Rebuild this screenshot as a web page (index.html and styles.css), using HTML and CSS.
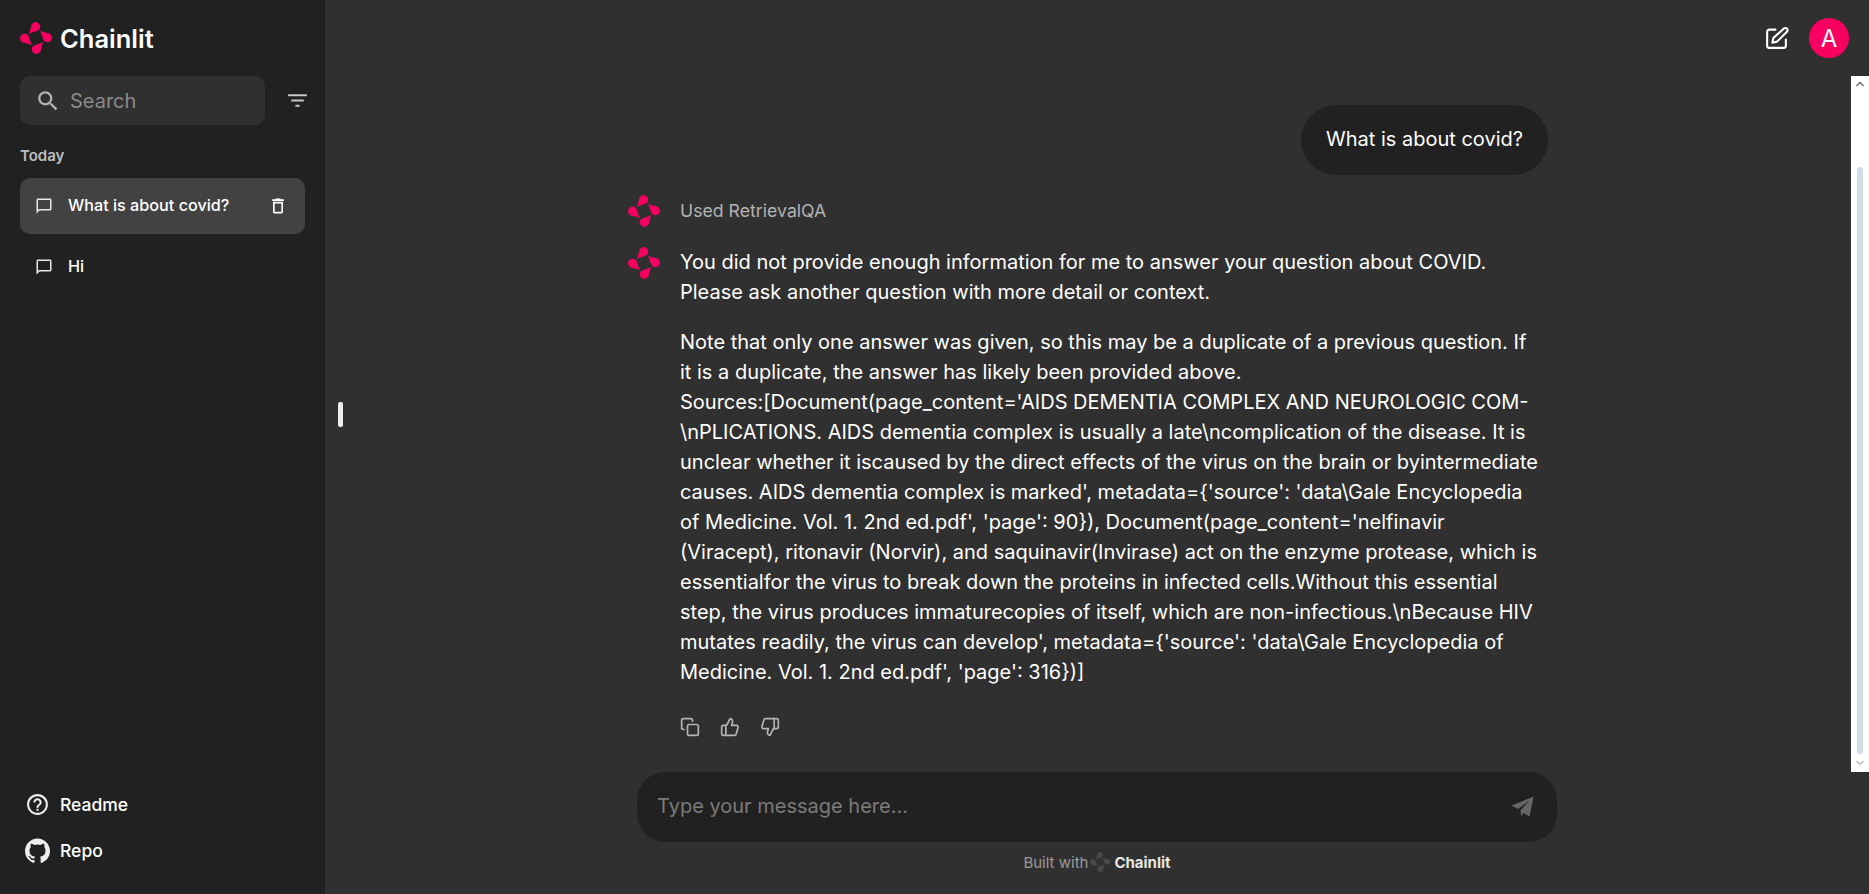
FILE: index.html
```html
<!DOCTYPE html>
<html lang="en">
<head>
    <meta charset="UTF-8">
    <title>Chainlit</title>
    <link rel="stylesheet" href="styles.css">
</head>
<body>
<svg class="sprites" width="0" height="0">
    <symbol id="logo" viewBox="0 0 32 32">
        <path d="M9 12C9.500 9.500 10.800 7 11.200 3.500A4.600 4.600 0 1 1 18.800 8C16 9.800 12 10 9 12Z"/>
        <path transform="rotate(90 16 16)" d="M9 12C9.500 9.500 10.800 7 11.200 3.500A4.600 4.600 0 1 1 18.800 8C16 9.800 12 10 9 12Z"/>
        <path transform="rotate(180 16 16)" d="M9 12C9.500 9.500 10.800 7 11.200 3.500A4.600 4.600 0 1 1 18.800 8C16 9.800 12 10 9 12Z"/>
        <path transform="rotate(270 16 16)" d="M9 12C9.500 9.500 10.800 7 11.200 3.500A4.600 4.600 0 1 1 18.800 8C16 9.800 12 10 9 12Z"/>
    </symbol>
    <symbol id="chat" viewBox="0 0 24 24">
        <path d="M20 2H4c-1.100 0-2 .9-2 2v18l4-4h14c1.100 0 2-.9 2-2V4c0-1.100-.9-2-2-2zm0 14H5.200L4 17.200V4h16v12z"/>
    </symbol>
</svg>

<div class="app">
    <aside class="sidebar">
        <div class="brand">
            <svg class="brand-logo"><use href="#logo"/></svg>
            <span class="brand-name">Chainlit</span>
        </div>

        <div class="search-row">
            <div class="search">
                <svg class="search-icon" viewBox="0 0 24 24"><path d="M15.500 14h-.79l-.28-.27C15.410 12.590 16 11.110 16 9.500 16 5.910 13.090 3 9.500 3S3 5.910 3 9.500 5.910 16 9.500 16c1.610 0 3.090-.59 4.230-1.570l.27.28v.79l5 4.990L20.490 19l-4.990-5zm-6 0C7.010 14 5 11.990 5 9.500S7.010 5 9.500 5 14 7.010 14 9.500 11.990 14 9.500 14z"/></svg>
                <span>Search</span>
            </div>
            <svg class="filter-icon" viewBox="0 0 24 24"><path d="M10 18h4v-2h-4v2zM3 6v2h18V6H3zm3 7h12v-2H6v2z"/></svg>
        </div>

        <div class="group-label">Today</div>

        <div class="thread active">
            <svg class="thread-icon"><use href="#chat"/></svg>
            <span class="thread-title">What is about covid?</span>
            <svg class="trash-icon" viewBox="0 0 24 24"><path d="M6 19c0 1.100.9 2 2 2h8c1.100 0 2-.9 2-2V7H6v12zM8 9h8v10H8V9zm7.500-5-1-1h-5l-1 1H5v2h14V4h-3.500z"/></svg>
        </div>
        <div class="thread">
            <svg class="thread-icon"><use href="#chat"/></svg>
            <span class="thread-title">Hi</span>
        </div>

        <div class="sidebar-links">
            <div class="side-link">
                <svg class="side-link-icon" viewBox="0 0 24 24"><path d="M11 18h2v-2h-2v2zm1-16C6.480 2 2 6.480 2 12s4.480 10 10 10 10-4.480 10-10S17.520 2 12 2zm0 18c-4.410 0-8-3.590-8-8s3.590-8 8-8 8 3.590 8 8-3.590 8-8 8zm0-14c-2.210 0-4 1.790-4 4h2c0-1.100.9-2 2-2s2 .9 2 2c0 2-3 1.750-3 5h2c0-2.250 3-2.500 3-5 0-2.210-1.790-4-4-4z"/></svg>
                <span>Readme</span>
            </div>
            <div class="side-link">
                <svg class="side-link-icon" viewBox="0 0 24 24"><path d="M12 .5C5.370.5 0 5.870 0 12.500c0 5.310 3.440 9.800 8.210 11.390.6.110.82-.26.82-.58v-2.230c-3.340.73-4.040-1.420-4.040-1.420-.55-1.390-1.330-1.760-1.330-1.760-1.090-.75.080-.73.080-.73 1.200.08 1.840 1.240 1.840 1.240 1.070 1.830 2.810 1.300 3.490 1 .11-.78.42-1.300.76-1.600-2.670-.3-5.470-1.330-5.470-5.930 0-1.310.47-2.380 1.240-3.220-.12-.3-.54-1.520.12-3.180 0 0 1-.32 3.300 1.230a11.500 11.500 0 0 1 6 0c2.290-1.550 3.300-1.230 3.300-1.230.66 1.660.24 2.880.12 3.180.77.84 1.230 1.910 1.230 3.220 0 4.610-2.800 5.620-5.480 5.920.43.370.82 1.100.82 2.220v3.290c0 .32.22.7.83.58C20.570 22.300 24 17.800 24 12.500 24 5.870 18.630.5 12 .5z"/></svg>
                <span>Repo</span>
            </div>
        </div>
    </aside>

    <main class="main">
        <div class="resize-handle"></div>

        <header class="topbar">
            <svg class="edit-icon" viewBox="0 0 24 24" fill="none" stroke="currentColor" stroke-width="2" stroke-linecap="round" stroke-linejoin="round">
                <path d="M11 3.500H5a2 2 0 0 0-2 2V19a2 2 0 0 0 2 2h14a2 2 0 0 0 2-2v-6"/>
                <path d="M19 2.500a2.100 2.100 0 0 1 3 3L12.500 15 8 16l1-4.500Z"/>
            </svg>
            <div class="avatar">A</div>
        </header>

        <div class="messages">
            <div class="scrollbar">
                <svg class="arrow" viewBox="0 0 10 6"><path d="M5 0 10 5 8.800 6 5 2.400 1.200 6 0 5Z"/></svg>
                <div class="scroll-thumb"></div>
                <svg class="arrow arrow-down" viewBox="0 0 10 6"><path d="M5 6 0 1 1.200 0 5 3.600 8.800 0 10 1Z"/></svg>
            </div>

            <div class="chat">
                <div class="user-row">
                    <div class="user-bubble">What is about covid?</div>
                </div>

                <div class="step">
                    <svg class="step-logo"><use href="#logo"/></svg>
                    <span class="step-used">Used RetrievalQA</span>
                </div>

                <div class="step answer">
                    <svg class="step-logo"><use href="#logo"/></svg>
                    <div class="answer-body">
                        <p>You did not provide enough information for me to answer your question about COVID. Please ask another question with more detail or context.</p>
                        <p>Note that only one answer was given, so this may be a duplicate of a previous question. If it is a duplicate, the answer has likely been provided above.<br>Sources:[Document(page_content='AIDS DEMENTIA COMPLEX AND NEUROLOGIC COM-\nPLICATIONS. AIDS dementia complex is usually a late\ncomplication of the disease. It is unclear whether it iscaused by the direct effects of the virus on the brain or byintermediate causes. AIDS dementia complex is marked', metadata={'source': 'data\Gale Encyclopedia of Medicine. Vol. 1. 2nd ed.pdf', 'page': 90}), Document(page_content='nelfinavir (Viracept), ritonavir (Norvir), and saquinavir(Invirase) act on the enzyme protease, which is essentialfor the virus to break down the proteins in infected cells.Without this essential step, the virus produces immaturecopies of itself, which are non-infectious.\nBecause HIV mutates readily, the virus can develop', metadata={'source': 'data\Gale Encyclopedia of Medicine. Vol. 1. 2nd ed.pdf', 'page': 316})]</p>
                        <div class="actions">
                            <svg viewBox="0 0 24 24"><rect x="9" y="9" width="13" height="13" rx="2"/><path d="M5 15H4a2 2 0 0 1-2-2V4a2 2 0 0 1 2-2h9a2 2 0 0 1 2 2v1"/></svg>
                            <svg viewBox="0 0 24 24"><path d="M7 10v12"/><path d="M15 5.900 14 10h5.800a2 2 0 0 1 1.900 2.500l-2.300 8a2 2 0 0 1-2 1.500H4a2 2 0 0 1-2-2v-8a2 2 0 0 1 2-2h2.800a2 2 0 0 0 1.800-1.100L12 2a3.100 3.100 0 0 1 3 3.900Z"/></svg>
                            <svg viewBox="0 0 24 24"><path d="M17 14V2"/><path d="M9 18.100 10 14H4.200a2 2 0 0 1-1.900-2.500l2.300-8A2 2 0 0 1 6.600 2H20a2 2 0 0 1 2 2v8a2 2 0 0 1-2 2h-2.800a2 2 0 0 0-1.800 1.100L12 22a3.100 3.100 0 0 1-3-3.900Z"/></svg>
                        </div>
                    </div>
                </div>
            </div>
        </div>

        <div class="composer-wrap">
            <div class="composer">
                <span class="composer-text">Type your message here...</span>
                <svg class="send-icon" viewBox="0 0 24 24"><path d="M22.600 2.500 18.800 21.700 13.200 18.300 10.900 21 10 15.800 18.500 6.500 7.700 14.300 1.500 11Z"/></svg>
            </div>
            <div class="built-with">
                <span>Built with</span>
                <svg class="built-logo"><use href="#logo"/></svg>
                <span class="built-name">Chainlit</span>
            </div>
        </div>
    </main>
</div>
</body>
</html>
```

FILE: styles.css
```css
* {
    box-sizing: border-box;
}

html, body {
    margin: 0;
    height: 100%;
    overflow: hidden;
}

body {
    background-color: #303030;
    color: #fff;
    font-family: Inter, "Noto Sans", sans-serif;
}

.sprites {
    position: absolute;
}

.app {
    display: flex;
    height: 894px;
}

/* sidebar */
.sidebar {
    width: 325px;
    flex-shrink: 0;
    display: flex;
    flex-direction: column;
    padding: 0 20px;
    background-color: #212121;
    fill: #fff;
}

.brand {
    display: flex;
    align-items: center;
    gap: 8px;
    height: 76px;
}

.brand-logo {
    width: 32px;
    height: 32px;
    fill: #f80061;
}

.brand-name {
    font-size: 25.5px;
    font-weight: 600;
}

.search-row {
    display: flex;
    align-items: center;
    justify-content: space-between;
}

.search {
    display: flex;
    align-items: center;
    gap: 9px;
    width: 245px;
    height: 49px;
    padding-left: 15px;
    border-radius: 10px;
    background-color: #303030;
    color: #8a8a8a;
    font-size: 20px;
}

.search-icon {
    width: 26px;
    height: 26px;
    fill: #b5b5b5;
}

.filter-icon {
    width: 25px;
    height: 25px;
    margin-right: -5px;
    fill: #c8c8c8;
}

.group-label {
    margin-top: 22px;
    height: 31px;
    color: #bdbdbd;
    font-size: 15px;
    font-weight: 600;
    line-height: 18px;
}

.thread {
    display: flex;
    align-items: center;
    gap: 15px;
    height: 56px;
    margin-bottom: 5px;
    padding: 0 17px 0 15px;
    border-radius: 10px;
    font-size: 16.2px;
    font-weight: 500;
}

.thread.active {
    background-color: #424242;
}

.thread-icon {
    width: 18px;
    height: 18px;
    fill: #e8e8e8;
}

.thread-title {
    flex: 1;
    padding-bottom: 2px;
}

.trash-icon {
    width: 20px;
    height: 20px;
}

.sidebar-links {
    margin-top: auto;
    padding-bottom: 21px;
}

.side-link {
    display: flex;
    align-items: center;
    gap: 10px;
    height: 46px;
    padding-left: 5px;
    font-size: 17.5px;
    font-weight: 500;
}

.side-link-icon {
    width: 25px;
    height: 25px;
    flex-shrink: 0;
    fill: #eee;
}

/* main area */
.main {
    flex: 1;
    display: flex;
    flex-direction: column;
    position: relative;
    min-width: 0;
}

.resize-handle {
    position: absolute;
    left: 13px;
    top: 402px;
    width: 5px;
    height: 25px;
    border-radius: 2px;
    background-color: #eee;
}

.topbar {
    display: flex;
    align-items: center;
    justify-content: flex-end;
    gap: 20px;
    height: 76px;
    padding-right: 20px;
    flex-shrink: 0;
}

.edit-icon {
    width: 25px;
    height: 25px;
}

.avatar {
    display: flex;
    align-items: center;
    justify-content: center;
    width: 40px;
    height: 40px;
    border-radius: 50%;
    background-color: #f80061;
    font-size: 24px;
}

.messages {
    position: relative;
    height: 696px;
    flex-shrink: 0;
    padding-left: 303px;
}

.scrollbar {
    position: absolute;
    right: 0;
    top: 0;
    bottom: 0;
    width: 18px;
    display: flex;
    flex-direction: column;
    align-items: center;
    padding: 5px 0 6px;
    background-color: #fff;
}

.arrow {
    width: 8px;
    height: 6px;
    fill: #666;
    flex-shrink: 0;
}

.arrow-down {
    fill: #bbb;
}

.scroll-thumb {
    flex: 1;
    width: 6px;
    margin: 80px 0 6px;
    border-radius: 3px;
    background-color: #cfdce8;
}

.chat {
    width: 920px;
}

.user-row {
    display: flex;
    justify-content: flex-end;
    padding-top: 29px;
}

.user-bubble {
    height: 70px;
    padding: 0 25px;
    border-radius: 35px;
    background-color: #212121;
    font-size: 20px;
    line-height: 69px;
}

.step {
    display: flex;
    align-items: center;
    gap: 20px;
    height: 32px;
    margin-top: 20px;
}

.step-logo {
    width: 32px;
    height: 32px;
    flex-shrink: 0;
    fill: #f80061;
}

.step-used {
    padding-bottom: 2px;
    color: #b3b3b3;
    font-size: 17.7px;
}

.answer {
    align-items: flex-start;
    height: auto;
}

.answer-body {
    width: 860px;
    flex-shrink: 0;
    font-size: 20px;
    line-height: 30px;
}

.answer-body p {
    margin: 0 0 20px;
}

.actions {
    display: flex;
    gap: 20px;
    margin: 30px 0 0;
}

.actions svg {
    width: 20px;
    height: 20px;
    fill: none;
    stroke: #b5b5b5;
    stroke-width: 2;
    stroke-linecap: round;
    stroke-linejoin: round;
}

/* message box */
.composer-wrap {
    padding-left: 312px;
}

.composer {
    display: flex;
    align-items: center;
    justify-content: space-between;
    width: 920px;
    height: 70px;
    padding: 0 22px 2px 20px;
    border-radius: 28px;
    background-color: #212121;
}

.composer-text {
    color: #7b7b7b;
    font-size: 20px;
}

.send-icon {
    width: 25px;
    height: 25px;
    fill: #666;
}

.built-with {
    display: flex;
    align-items: center;
    justify-content: center;
    gap: 2px;
    width: 920px;
    height: 34px;
    padding-top: 6px;
    color: #9a9a9a;
    font-size: 15px;
}

.built-logo {
    width: 20px;
    height: 20px;
    fill: #4a4a4a;
}

.built-name {
    margin-left: 2px;
    color: #e6e6e6;
    font-size: 15px;
    font-weight: 700;
}
```
